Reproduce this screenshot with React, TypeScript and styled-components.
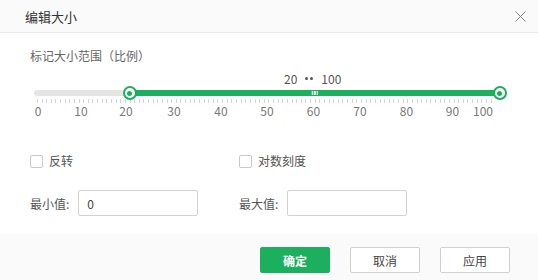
import styled, {createGlobalStyle} from "styled-components";
import {useState} from "react";

const GREEN = "#1caf5d";

const GlobalStyle = createGlobalStyle`
  body {
    margin: 0;
    font-family: "Microsoft YaHei", "Noto Sans CJK SC", sans-serif;
    background: #fff;
  }
`

// slider scale: value -> x inside the rail (rail starts at page x 34)
const RAIL_LEFT = 34;
const toX = (v: number) => 36.9 + v * 4.63 - RAIL_LEFT;

const tickLabels = [
  {v: 0, x: 38},
  {v: 10, x: 81},
  {v: 20, x: 126},
  {v: 30, x: 174},
  {v: 40, x: 221},
  {v: 50, x: 267},
  {v: 60, x: 313.5},
  {v: 70, x: 360},
  {v: 80, x: 406.5},
  {v: 90, x: 452.5},
  {v: 100, x: 483},
];

const Dialog = styled.div`
  width: 538px;
  height: 280px;
  display: flex;
  flex-direction: column;
  background: #fff;
`

const Header = styled.div`
  height: 32px;
  flex: none;
  padding: 0 10px 0 25px;
  display: flex;
  align-items: center;
  justify-content: space-between;
  background: #fafafa;
  border-bottom: 1px solid #e8e8e8;
`

const Title = styled.span`
  font-size: 13px;
  color: #333;
`

const CloseBtn = styled.button`
  width: 16px;
  height: 16px;
  padding: 0;
  border: none;
  background: none;
  display: flex;
  align-items: center;
  justify-content: center;
`

const Body = styled.div`
  flex: 1;
  padding: 15px 30px 0 30px;
  display: flex;
  flex-direction: column;
`

const SectionLabel = styled.div`
  font-size: 12px;
  line-height: 16px;
  color: #666;
`

const Readout = styled.div`
  margin-top: 7px;
  margin-left: 254px;
  height: 14px;
  display: flex;
  align-items: center;
  gap: 8px;
  font-size: 12px;
  color: #555;
`

const Dots = styled.span`
  display: flex;
  gap: 2px;
  & > i {
    width: 3px;
    height: 3px;
    border-radius: 50%;
    background: #555;
  }
`

const Rail = styled.div`
  position: relative;
  margin-top: 1px;
  margin-left: ${RAIL_LEFT - 30}px;
  width: 470px;
  height: 14px;
`

const Track = styled.div`
  position: absolute;
  left: 0;
  right: 4px;
  top: 4px;
  height: 6px;
  border-radius: 3px;
  background: #e5e5e5;
`

const Fill = styled.div`
  position: absolute;
  top: 4px;
  height: 6px;
  background: ${GREEN};
`

const Grip = styled.div`
  position: absolute;
  top: 5px;
  height: 4px;
  display: flex;
  gap: 1px;
  transform: translateX(-50%);
  & > i {
    width: 1.5px;
    height: 4px;
    background: #fff;
  }
`

const Handle = styled.div`
  position: absolute;
  top: 0;
  width: 14px;
  height: 14px;
  box-sizing: border-box;
  border: 2px solid ${GREEN};
  border-radius: 50%;
  background: #fff;
  transform: translateX(-50%);
  display: flex;
  align-items: center;
  justify-content: center;
  &::after {
    content: "";
    width: 5px;
    height: 5px;
    border-radius: 50%;
    background: ${GREEN};
  }
`

const Ticks = styled.svg`
  display: block;
  margin-left: ${RAIL_LEFT - 30}px;
  margin-top: -1px;
`

const Scale = styled.div`
  position: relative;
  height: 14px;
  margin-top: 1px;
  font-size: 12px;
  line-height: 14px;
  color: #777;
`

const ScaleLabel = styled.span`
  position: absolute;
  top: 0;
  transform: translateX(-50%);
`

const Grid = styled.div`
  display: grid;
  grid-template-columns: 209px 1fr;
`

const CheckRow = styled(Grid)`
  margin-top: 36px;
`

const Check = styled.label`
  display: flex;
  align-items: center;
  gap: 6px;
  font-size: 12px;
  line-height: 14px;
  color: #555;
`

const Box = styled.span<{ $checked: boolean }>`
  width: 13px;
  height: 13px;
  box-sizing: border-box;
  border: 1px solid ${p => p.$checked ? GREEN : "#c9c9c9"};
  border-radius: 2px;
  background: ${p => p.$checked ? GREEN : "#fff"};
`

const InputRow = styled(Grid)`
  margin-top: 22px;
`

const Field = styled.div`
  display: flex;
  align-items: center;
  gap: 9px;
  font-size: 12px;
  color: #555;
`

const Input = styled.input`
  width: 120px;
  height: 26px;
  box-sizing: border-box;
  border: 1px solid #d2d2d2;
  border-radius: 2px;
  padding: 0 8px;
  font-family: inherit;
  font-size: 12px;
  color: #444;
  outline: none;
`

const Footer = styled.div`
  height: 46px;
  flex: none;
  box-sizing: border-box;
  padding: 13px 28px 0 0;
  display: flex;
  justify-content: flex-end;
  gap: 20px;
  background: #fafafa;
`

const Button = styled.button<{ $primary?: boolean }>`
  width: 70px;
  height: 26px;
  border-radius: 2px;
  font-family: inherit;
  font-size: 12px;
  font-weight: ${p => p.$primary ? "bold" : "normal"};
  color: ${p => p.$primary ? "#fff" : "#444"};
  background: ${p => p.$primary ? GREEN : "#fff"};
  border: 1px solid ${p => p.$primary ? GREEN : "#cfcfcf"};
`

export default function App() {
  const [min] = useState(20);
  const [max] = useState(100);
  const [reverse, setReverse] = useState(false);
  const [logScale, setLogScale] = useState(false);

  const ticks = Array.from({length: 99}, (_, i) => toX(i));

  return (
    <Dialog>
      <GlobalStyle/>
      <Header>
        <Title>编辑大小</Title>
        <CloseBtn>
          <svg width="11" height="11" viewBox="0 0 11 11">
            <path d="M0.5 0.5 L10.5 10.5 M10.5 0.5 L0.5 10.5" stroke="#888" strokeWidth="1"/>
          </svg>
        </CloseBtn>
      </Header>

      <Body>
        <SectionLabel>标记大小范围（比例）</SectionLabel>
        <Readout>
          <span>{min}</span>
          <Dots><i/><i/></Dots>
          <span>{max}</span>
        </Readout>

        <Rail>
          <Track/>
          <Fill style={{left: toX(min), width: toX(max) - toX(min)}}/>
          <Grip style={{left: (toX(min) + toX(max)) / 2}}><i/><i/><i/></Grip>
          <Handle style={{left: toX(min)}}/>
          <Handle style={{left: toX(max)}}/>
        </Rail>

        <Ticks width="470" height="4">
          {ticks.map((x, i) => (
            <line key={i} x1={Math.round(x) + 0.5} x2={Math.round(x) + 0.5} y1="0" y2="4" stroke="#d4d4d4" strokeWidth="1"/>
          ))}
        </Ticks>

        <Scale>
          {tickLabels.map(t => (
            <ScaleLabel key={t.v} style={{left: t.x - 30}}>{t.v}</ScaleLabel>
          ))}
        </Scale>

        <CheckRow>
          <Check onClick={() => setReverse(!reverse)}>
            <Box $checked={reverse}/>
            反转
          </Check>
          <Check onClick={() => setLogScale(!logScale)}>
            <Box $checked={logScale}/>
            对数刻度
          </Check>
        </CheckRow>

        <InputRow>
          <Field>
            最小值:
            <Input defaultValue="0"/>
          </Field>
          <Field>
            最大值:
            <Input defaultValue=""/>
          </Field>
        </InputRow>
      </Body>

      <Footer>
        <Button $primary>确定</Button>
        <Button>取消</Button>
        <Button>应用</Button>
      </Footer>
    </Dialog>
  )
}
